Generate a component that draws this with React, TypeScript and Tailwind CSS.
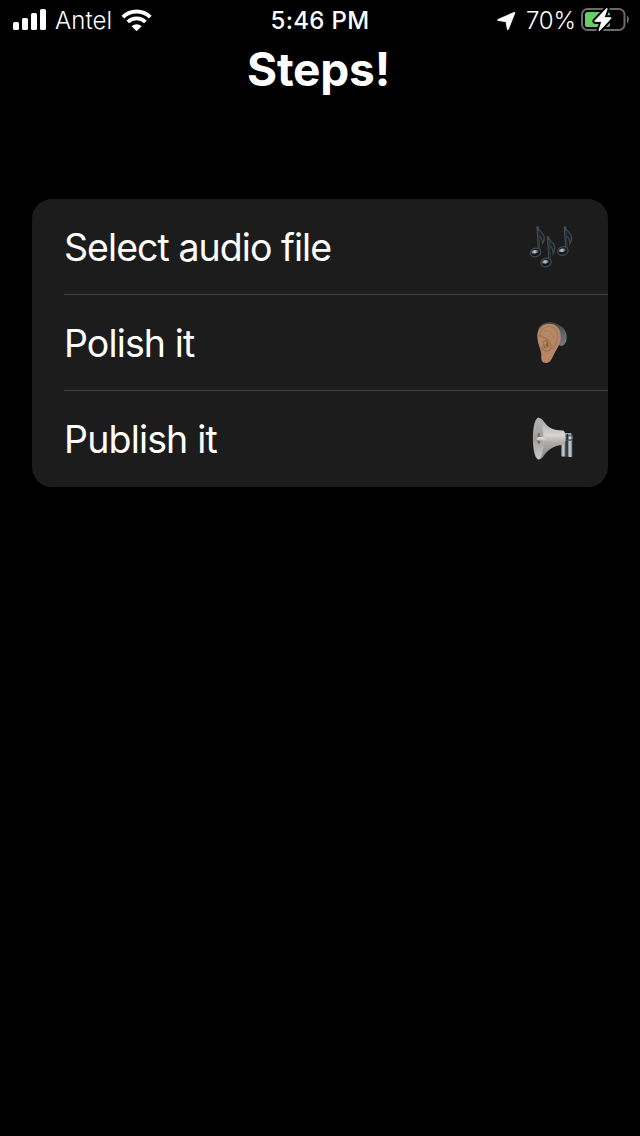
import type { ReactNode } from "react";

function SignalIcon() {
  return (
    <svg className="ml-3 h-6 w-[35px] shrink-0" viewBox="12 9 35 24" fill="#fff">
      <rect x="13" y="22" width="6" height="8" rx="1.6" />
      <rect x="22" y="18" width="6" height="12" rx="1.6" />
      <rect x="31" y="13" width="6" height="17" rx="1.6" />
      <rect x="40" y="9" width="6" height="21" rx="1.6" />
    </svg>
  );
}

function WifiIcon() {
  return (
    <svg className="h-6 w-8 shrink-0" viewBox="121 9 32 24" fill="none" stroke="#fff">
      <path d="M122.900 17.100a19.600 19.600 0 0 1 27.400 0" strokeWidth="4" />
      <path d="M127.800 22a12.600 12.600 0 0 1 17.600 0" strokeWidth="3.800" />
      <path d="M131.600 26.200a7.200 7.200 0 0 1 10 0l-4.200 4.300q-.8.8-1.600 0Z" fill="#fff" stroke="none" />
    </svg>
  );
}

function LocationIcon() {
  return (
    <svg className="h-6 w-5 shrink-0" viewBox="496 9 20 24" fill="#fff">
      <path
        d="M514 12.400 497.900 19.500c-.5.300-.4.800.1.900l8 1.300 1.400 7.700c.1.500.7.600.9.100l6.500-16.300c.2-.600-.2-1-.8-.8Z"
        stroke="#fff"
        strokeWidth=".8"
        strokeLinejoin="round"
      />
    </svg>
  );
}

function BatteryIcon() {
  const bolt = "M606.500 8.600 594.900 20.700c-.4.500-.2.900.4.900h6.400l-2.700 8.500c-.2.700.3.900.8.400l11.100-12c.4-.5.2-.9-.4-.9h-6.300l3-8.600c.2-.6-.3-.8-.7-.4Z";
  return (
    <svg className="h-7 w-[50px] shrink-0" viewBox="580 7 50 28">
      <rect x="582" y="9" width="42.500" height="21" rx="5.500" fill="none" stroke="#6b6b6b" strokeWidth="2" />
      <path d="M627 15.500c2.400 1.200 2.400 6.800 0 8Z" fill="#6b6b6b" />
      <rect x="585" y="12" width="25" height="15" rx="2.600" fill="#65cf66" />
      <path d={bolt} fill="#000" stroke="#000" strokeWidth="4.600" />
      <path d={bolt} fill="#fff" stroke="#fff" strokeWidth=".8" />
    </svg>
  );
}

function Note({ x, y, drop }: { x: number; y: number; drop: number }) {
  return (
    <g transform={`translate(${x} ${y})`}>
      <path d="M0 0c.8 4.500 6.300 5.500 6.800 10.500.2 2.500-.5 4.800-1.700 6.800.1-3.600-.6-6.500-4.400-8.300Z" fill="#1d2329" stroke="#3f4851" strokeWidth="1.200" />
      <path d={`M.1 0 1.700 ${drop}`} stroke="#434c55" strokeWidth="2.500" />
      <path d={`M.8 4 1.800 ${drop - 1}`} stroke="#15191d" strokeWidth=".7" />
      <g transform={`translate(-2 ${drop})`}>
        <ellipse rx="5.200" ry="4.200" transform="rotate(-12)" fill="#14181c" stroke="#3d4a56" strokeWidth="1.300" />
        <ellipse cx="-.3" cy="-.8" rx="3.700" ry="1.700" transform="rotate(-10)" fill="url(#noteShine)" />
      </g>
    </g>
  );
}

function MusicIcon() {
  return (
    <svg className="size-16 shrink-0" viewBox="0 0 64 64" fill="none">
      <defs>
        <linearGradient id="noteShine">
          <stop stopColor="#59636c" />
          <stop offset=".45" stopColor="#c5c9cc" />
          <stop offset="1" stopColor="#252c33" />
        </linearGradient>
      </defs>
      <Note x={17.500} y={11.500} drop={26} />
      <Note x={44.800} y={11.500} drop={24.500} />
      <Note x={28} y={21.500} drop={26} />
    </svg>
  );
}

function EarIcon() {
  return (
    <svg className="size-16 shrink-0" viewBox="0 1 64 64" fill="none">
      <defs>
        <linearGradient id="skin" x1="18" y1="14" x2="40" y2="50" gradientUnits="userSpaceOnUse">
          <stop stopColor="#b38a6b" />
          <stop offset="1" stopColor="#bb8360" />
        </linearGradient>
        <linearGradient id="aid" x1="36" y1="16" x2="47" y2="32" gradientUnits="userSpaceOnUse">
          <stop stopColor="#48494b" />
          <stop offset="1" stopColor="#77787b" />
        </linearGradient>
      </defs>
      <path d="M32 13.500c8 0 14.500 5.500 14.700 13 .1 4.500-1.500 8.500-5 9.500l-3-1Z" fill="url(#aid)" />
      <path d="M18.500 20c2-5 6-7.200 11-7.200 4 0 7 1.200 9.500 4" stroke="#4b4f54" strokeWidth="1.300" />
      <path d="M17.400 28c-.9-8.500 4.300-14.300 11.900-14.300 7.600 0 11.900 6 11.500 14-.4 7-4.300 11.300-7 16.800-2 4.300-3.400 8.500-7.800 8.500-4 0-5.200-3-4.700-7.500.5-5-3.200-9.500-3.900-17.500Z" fill="url(#skin)" />
      <path d="M20 26.500c.2-6.500 4-10 9.300-10 6 0 9 5.300 8.100 12-.7 5-2.700 7.500-5.400 10.500" stroke="#a27757" strokeWidth="1.200" />
      <path d="M18.500 25.500c5 1 8 2.700 10.400 6 2.800 3.700 3 8.300-.9 9.300-3.200.8-5.500-1.200-6.500-3.800" stroke="#986b4c" strokeWidth="1.200" />
      <path d="M23.500 21.500c5.500-2.300 10.200 1.200 10 8" stroke="#ad7f60" strokeWidth="1.500" />
      <path d="M23 31.500c2-2 4.400-1.100 5 1.300.8 2.700.6 5.300-1.700 5.600-2.500.3-3.400-4.300-3.300-6.900Z" fill="#845c38" />
      <circle cx="25" cy="33" r="1.700" fill="#b98d58" />
      <path d="m24.500 34.500 2.500 3.500" stroke="#af8251" strokeWidth="1.400" />
    </svg>
  );
}

function MegaphoneIcon() {
  return (
    <svg className="size-16 shrink-0" viewBox="0 1 64 64" fill="none">
      <defs>
        <linearGradient id="horn" x1="27" y1="13" x2="27" y2="52" gradientUnits="userSpaceOnUse">
          <stop stopColor="#a3a2a0" />
          <stop offset=".42" stopColor="#d7d6d4" />
          <stop offset=".6" stopColor="#aeadab" />
          <stop offset="1" stopColor="#858482" />
        </linearGradient>
        <linearGradient id="bell" x1="15" y1="12" x2="19" y2="53" gradientUnits="userSpaceOnUse">
          <stop stopColor="#b3b2b0" />
          <stop offset=".5" stopColor="#a09f9d" />
          <stop offset="1" stopColor="#c9c8c6" />
        </linearGradient>
        <linearGradient id="post">
          <stop stopColor="#6d7880" />
          <stop offset=".45" stopColor="#ced9e1" />
          <stop offset="1" stopColor="#64717b" />
        </linearGradient>
      </defs>
      <rect x="42" y="34" width="8" height="17" fill="#353a3e" />
      <rect x="41.200" y="32" width="4.300" height="18.500" rx="1" fill="url(#post)" />
      <rect x="48" y="30" width="4.300" height="21" rx="1" fill="url(#post)" />
      <path d="M43 27h7.500c3 0 3 8 0 8H43Z" fill="#59646d" />
      <path d="M45 28h6" stroke="#a4b5c2" strokeWidth="1.500" />
      <path d="M47.300 28v6.500" stroke="#282d31" strokeWidth="1.500" />
      <circle cx="50" cy="31.700" r="1.500" fill="#ced9e2" />
      <path d="M18.500 12c2.900-.5 4.500 2.300 6.500 5 4 5.500 9.500 7.400 17.500 7.400 2.100 0 3 2.500 3 7.500 0 4.500-1 7-3.200 7.100C34 39.500 28 44 24.200 49c-1.500 2.800-3.200 4.800-6 4.200Z" fill="url(#horn)" />
      <path d="M18.200 12c-2.700.3-4.900 9-4.900 20.300 0 11.500 2 20.300 5 20.900 3.400.6 5-9 5-20.500 0-12-2.200-21.100-5.100-20.700Z" fill="url(#bell)" stroke="#bdbcba" strokeWidth=".7" />
      <ellipse cx="18.800" cy="32.500" rx="1.500" ry="5.500" fill="#737270" />
      <path d="M18.500 32.800h5" stroke="#cbcac8" strokeWidth="3.600" strokeLinecap="round" />
      <path d="M18.500 31.800h5" stroke="#e2e1df" strokeWidth="1.200" strokeLinecap="round" />
    </svg>
  );
}

function Row({ label, spacing, icon, last }: { label: string; spacing: string; icon: ReactNode; last?: boolean }) {
  return (
    <li className={`ml-8 flex h-24 items-center justify-between pr-6 ${last ? "" : "border-b border-[#414144]"}`}>
      <span className={`text-[37.500px] leading-[48px] whitespace-nowrap ${last ? "pt-px" : "pt-0.5"} ${spacing}`}>{label}</span>
      {icon}
    </li>
  );
}

export default function App() {
  return (
    <div className="flex h-[1136px] w-[640px] flex-col overflow-hidden bg-black font-['Inter',sans-serif] text-white">
      <header className="grid h-10 grid-cols-3 items-center text-[24px] leading-10">
        <div className="flex items-center">
          <SignalIcon />
          <span className="ml-2 w-[66px] pt-px font-[350] tracking-[0.1px]">Antel</span>
          <WifiIcon />
        </div>
        <div className="pt-px text-center font-medium tracking-[0.3px] whitespace-nowrap">5:46 PM</div>
        <div className="flex items-center justify-end pr-2.5">
          <LocationIcon />
          <span className="mr-1 ml-2.5 w-[50px] pt-px font-[350] tracking-[-0.2px] whitespace-nowrap">70%</span>
          <BatteryIcon />
        </div>
      </header>
      <h1 className="h-[159px] pr-[3px] text-center text-[46px] leading-[58px] font-bold tracking-[-0.2px]">Steps!</h1>
      <ul className="mx-8 h-72 rounded-[20px] bg-[#1c1c1c]">
        <Row label="Select audio file" spacing="tracking-[-0.95px]" icon={<MusicIcon />} />
        <Row label="Polish it" spacing="tracking-[-0.88px]" icon={<EarIcon />} />
        <Row label="Publish it" spacing="tracking-[-0.82px]" icon={<MegaphoneIcon />} last />
      </ul>
    </div>
  );
}
